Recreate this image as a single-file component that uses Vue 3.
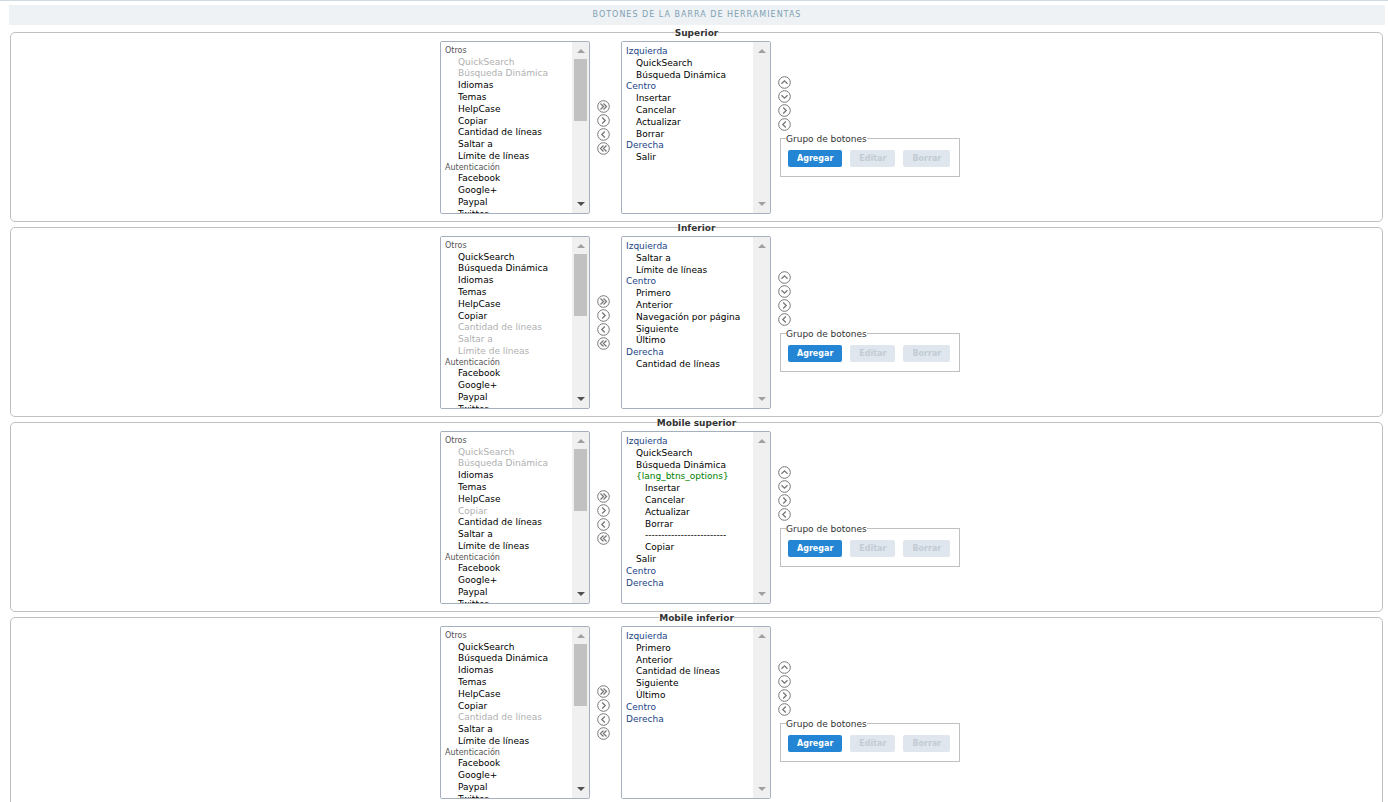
<script setup>
const catalog = [
  { label: 'Otros', items: ['QuickSearch', 'Búsqueda Dinámica', 'Idiomas', 'Temas', 'HelpCase', 'Copiar', 'Cantidad de líneas', 'Saltar a', 'Límite de líneas'] },
  { label: 'Autenticación', items: ['Facebook', 'Google+', 'Paypal', 'Twitter'] },
]

const z = (text) => ({ text, kind: 'zone' })
const i = (text) => ({ text, kind: 'item' })
const g = (text) => ({ text, kind: 'group' })
const s = (text) => ({ text, kind: 'sub' })

const bars = [
  {
    id: 'top', title: 'Superior', used: ['QuickSearch', 'Búsqueda Dinámica'],
    rows: [z('Izquierda'), i('QuickSearch'), i('Búsqueda Dinámica'), z('Centro'), i('Insertar'), i('Cancelar'), i('Actualizar'), i('Borrar'), z('Derecha'), i('Salir')],
  },
  {
    id: 'bottom', title: 'Inferior', used: ['Cantidad de líneas', 'Saltar a', 'Límite de líneas'],
    rows: [z('Izquierda'), i('Saltar a'), i('Límite de líneas'), z('Centro'), i('Primero'), i('Anterior'), i('Navegación por página'), i('Siguiente'), i('Último'), z('Derecha'), i('Cantidad de líneas')],
  },
  {
    id: 'mtop', title: 'Mobile superior', used: ['QuickSearch', 'Búsqueda Dinámica', 'Copiar'],
    rows: [z('Izquierda'), i('QuickSearch'), i('Búsqueda Dinámica'), g('{lang_btns_options}'), s('Insertar'), s('Cancelar'), s('Actualizar'), s('Borrar'), s('-------------------------'), s('Copiar'), i('Salir'), z('Centro'), z('Derecha')],
  },
  {
    id: 'mbottom', title: 'Mobile inferior', used: ['Cantidad de líneas'],
    rows: [z('Izquierda'), i('Primero'), i('Anterior'), i('Cantidad de líneas'), i('Siguiente'), i('Último'), z('Centro'), z('Derecha')],
  },
]

const transfer = [
  { label: 'Agregar todos', d: 'M3.5 3.5l3 3-3 3M6.5 3.5l3 3-3 3' },
  { label: 'Agregar selección', d: 'M5.2 3.5l3 3-3 3' },
  { label: 'Quitar selección', d: 'M7.8 3.5l-3 3 3 3' },
  { label: 'Quitar todos', d: 'M6.5 3.5l-3 3 3 3M9.5 3.5l-3 3 3 3' },
]
const moves = [
  { label: 'Subir', d: 'M3.5 7.8l3-3 3 3' },
  { label: 'Bajar', d: 'M3.5 5.2l3 3 3-3' },
  { label: 'Mover a la derecha', d: 'M5.2 3.5l3 3-3 3' },
  { label: 'Mover a la izquierda', d: 'M7.8 3.5l-3 3 3 3' },
]
</script>

<template>
  <main class="page">
    <h1 class="heading">BOTONES DE LA BARRA DE HERRAMIENTAS</h1>
    <fieldset v-for="bar in bars" :key="bar.id" class="bar">
      <legend class="bar-title">{{ bar.title }}</legend>
      <div class="editor">
        <div class="listbox">
          <select class="list source" multiple :aria-label="'Botones disponibles: ' + bar.title">
            <optgroup v-for="group in catalog" :key="group.label" :label="group.label">
              <option v-for="item in group.items" :key="item" :disabled="bar.used.includes(item)">{{ item }}</option>
            </optgroup>
          </select>
          <div class="scroll active" aria-hidden="true">
            <i class="up"></i><i class="thumb"></i><i class="down"></i>
          </div>
        </div>
        <div class="icons transfer">
          <button v-for="b in transfer" :key="b.label" type="button" class="round" :aria-label="b.label">
            <svg viewBox="0 0 13 13"><circle cx="6.5" cy="6.5" r="5.8" /><path :d="b.d" /></svg>
          </button>
        </div>
        <div class="listbox">
          <select class="list target" multiple :aria-label="'Botones de la barra: ' + bar.title">
            <option v-for="row in bar.rows" :key="row.text" :class="row.kind">{{ row.text }}</option>
          </select>
          <div class="scroll" aria-hidden="true">
            <i class="up"></i><i class="down"></i>
          </div>
        </div>
        <div class="side">
          <div class="icons">
            <button v-for="b in moves" :key="b.label" type="button" class="round" :aria-label="b.label">
              <svg viewBox="0 0 13 13"><circle cx="6.5" cy="6.5" r="5.8" /><path :d="b.d" /></svg>
            </button>
          </div>
          <fieldset class="group-box">
            <legend>Grupo de botones</legend>
            <div class="actions">
              <button type="button" class="btn primary">Agregar</button>
              <button type="button" class="btn" disabled>Editar</button>
              <button type="button" class="btn" disabled>Borrar</button>
            </div>
          </fieldset>
        </div>
      </div>
    </fieldset>
  </main>
</template>

<style>
html, body {
  background: #fff;
}
</style>

<style scoped>
.page {
  box-sizing: border-box;
  height: 100vh;
  overflow: hidden;
  padding: 4px 3px 0 9px;
  border-top: 1px solid #cfdbe3;
  font-family: "DejaVu Sans", Verdana, sans-serif;
  font-size: 9px;
  color: #333;
}
.heading {
  margin: 0 0 2px;
  height: 20px;
  line-height: 20px;
  background: #eef2f5;
  color: #7fa1b3;
  font-size: 8px;
  font-weight: 400;
  letter-spacing: 1px;
  text-align: center;
}
.bar {
  box-sizing: border-box;
  margin: 0 2px 0 1px;
  height: 195px;
  min-width: 0;
  padding: 0;
  border: 1px solid #c0c0c0;
  border-radius: 5px;
}
.bar-title {
  margin: 0 auto;
  padding: 0;
  height: 11px;
  line-height: 12px;
  font-weight: 700;
}
.editor {
  display: flex;
  justify-content: center;
  padding: 3px 0 0 7px;
}
.listbox {
  box-sizing: border-box;
  display: flex;
  width: 150px;
  height: 173px;
  border: 1px solid #a5afbd;
  border-radius: 2px;
  overflow: hidden;
}
.list {
  flex: 1;
  min-width: 0;
  height: 100%;
  margin: 0;
  padding: 4px 0 0;
  border: 0;
  outline: 0;
  border-radius: 0;
  background: #fff;
  overflow: hidden;
  font-family: inherit;
  font-size: 9px;
  color: #000;
}
.list option {
  padding: 0 2px 1px 4px;
}
.source optgroup {
  font-size: 8px;
  font-weight: 400;
  color: #555;
  padding-left: 2px;
}
.source option {
  font-size: 9px;
  color: #000;
  padding-left: 15px;
}
.source option:disabled {
  color: #b0b0b0;
}
.target .zone {
  color: #1c4587;
}
.target .item {
  padding-left: 14px;
}
.target .group {
  padding-left: 14px;
  color: #008000;
}
.target .sub {
  padding-left: 23px;
}
.scroll {
  display: flex;
  flex-direction: column;
  align-items: center;
  width: 17px;
  background: #f0f0f0;
}
.up,
.down {
  width: 0;
  height: 0;
  border: 4px solid transparent;
}
.up {
  margin-top: 3px;
  border-bottom-color: #a0a0a0;
}
.down {
  margin-top: auto;
  margin-bottom: 3px;
  border-top-color: #a0a0a0;
}
.active .down {
  border-top-color: #505050;
}
.thumb {
  width: 13px;
  height: 62px;
  margin-top: 6px;
  background: #c1c1c1;
}
.icons {
  display: flex;
  flex-direction: column;
  gap: 1px;
}
.transfer {
  justify-content: center;
  width: 24px;
  padding-left: 7px;
}
.round {
  display: block;
  width: 13px;
  height: 13px;
  padding: 0;
  border: 0;
  background: none;
}
.round svg {
  display: block;
  width: 13px;
  height: 13px;
  fill: none;
  stroke: #777;
}
.round path {
  stroke-width: 1.3;
}
.side {
  width: 180px;
  margin-left: 9px;
  padding-top: 35px;
}
.side .icons {
  margin-left: -2px;
}
.group-box {
  box-sizing: border-box;
  margin: 2px 0 0;
  min-width: 0;
  height: 44px;
  padding: 0 7px;
  border: 1px solid #c0c0c0;
}
.group-box legend {
  height: 11px;
  line-height: 12px;
  margin-left: -2px;
  padding: 0;
}
.actions {
  display: flex;
  gap: 8px;
  padding-top: 6px;
}
.btn {
  height: 17px;
  padding: 0 9px;
  border: 0;
  border-radius: 2px;
  background: #dfe6ed;
  color: #c3ccd5;
  font-family: inherit;
  font-size: 8px;
  font-weight: 700;
}
.primary {
  background: #2385d3;
  color: #fff;
}
</style>
